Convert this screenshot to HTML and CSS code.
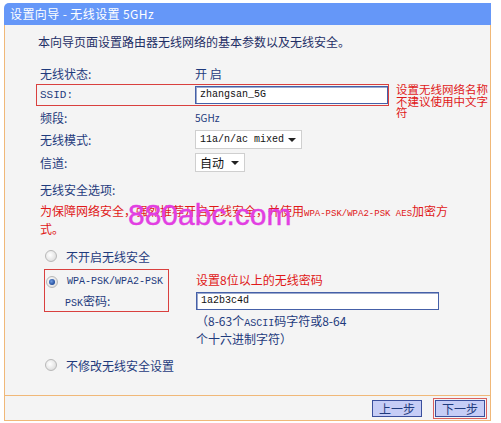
FILE: index.html
```html
<!DOCTYPE html>
<html>
<head>
<meta charset="utf-8">
<link rel="stylesheet" href="styles.css">
</head>
<body>
<div class="frame">
  <div class="title">设置向导 - 无线设置 5GHz</div>
  <div class="panel">
    <p class="intro">本向导页面设置路由器无线网络的基本参数以及无线安全。</p>
    <div class="row"><span class="label">无线状态:</span><span class="value">开 启</span></div>
    <div class="row ssid-row">
      <div class="ssid-box">
        <span class="label">SSID:</span>
        <span class="input ssid-input">zhangsan_5G</span>
      </div>
      <div class="note">设置无线网络名称<br>不建议使用中文字<br>符</div>
    </div>
    <div class="row"><span class="label">频段:</span><span class="value small">5GHz</span></div>
    <div class="row sel-row"><span class="label">无线模式:</span><span class="select mode">11a/n/ac mixed<i class="arrow"></i></span></div>
    <div class="row sel-row"><span class="label">信道:</span><span class="select chan">自动<i class="arrow"></i></span></div>
    <div class="row sec-title"><span class="label">无线安全选项:</span></div>
    <p class="warn">为保障网络安全，强烈推荐开启无线安全，并使用<span class="mono-s">WPA-PSK/WPA2-PSK AES</span>加密方<br>式。</p>
    <div class="row radio-row r1"><span class="radio"></span><span class="rlabel">不开启无线安全</span></div>
    <div class="wpa-area">
      <div class="wpa-box">
        <div class="wpa-line"><span class="radio checked"></span><span class="rlabel mono">WPA-PSK/WPA2-PSK</span></div>
        <div class="wpa-line psk"><span class="rlabel"><span class="mono">PSK</span>密码:</span></div>
      </div>
      <div class="wpa-right">
        <div class="pw-note">设置8位以上的无线密码</div>
        <span class="input pw-input">1a2b3c4d</span>
      </div>
    </div>
    <p class="hint">（8-63个<span class="mono">ASCII</span>码字符或8-64<br>个十六进制字符）</p>
    <div class="row radio-row r3"><span class="radio"></span><span class="rlabel">不修改无线安全设置</span></div>
    <div class="watermark">880abc.com</div>
  </div>
  <div class="footer">
    <span class="btn">上一步</span>
    <span class="btn-wrap"><span class="btn">下一步</span></span>
  </div>
</div>
</body>
</html>
```

FILE: styles.css
```css
html, body {
  margin: 0;
  padding: 0;
  background: #ffffff;
}
body {
  font-family: "Noto Sans CJK SC", "Liberation Sans", sans-serif;
  font-size: 12px;
  color: #1f3b7d;
}
.frame {
  margin: 3px 0 0 4px;
  width: 487px;
}
.title {
  height: 22px;
  line-height: 22px;
  background: #6597f8;
  color: #ffffff;
  padding-left: 6px;
  border-radius: 5px 0 0 0;
  font-size: 12px;
  letter-spacing: 0.4px;
}
.panel {
  position: relative;
  box-sizing: border-box;
  height: 371px;
  background: #f4f4f4;
  border-left: 1px solid #f0b878;
  border-right: 1px solid #f0b878;
  border-bottom: 1px solid #f0b878;
  padding: 8px 0 0 33px;
  overflow: hidden;
}
.intro {
  margin: 0;
  line-height: 18px;
  color: #1f2f66;
}
.row {
  display: flex;
  align-items: center;
  height: 22px;
}
.intro + .row {
  margin-top: 11px;
}
.label {
  width: 155px;
  flex: none;
  color: #1f3b7d;
}
.value {
  color: #1f3b7d;
}
.value.small {
  font-size: 10px;
}
.row:not(.ssid-row) {
  padding-left: 2px;
}
.ssid-row {
  height: 22px;
  align-items: flex-start;
  position: relative;
}
.ssid-box {
  box-sizing: border-box;
  display: flex;
  align-items: center;
  width: 354px;
  height: 22px;
  border: 1px solid #d9403e;
  margin-left: -2px;
  padding-left: 3px;
}
.ssid-box .label {
  font-family: "Liberation Mono", monospace;
  font-size: 11px;
}
.input {
  box-sizing: border-box;
  display: inline-block;
  background: #ffffff;
  border: 1px solid #4560a8;
  box-shadow: inset 1px 1px 0 #9aa8cc;
  height: 18px;
  line-height: 16px;
  padding-left: 4px;
  font-family: "Liberation Mono", monospace;
  font-size: 10px;
  color: #111111;
}
.ssid-input {
  width: 193px;
}
.note {
  margin-left: 7px;
  color: #e01818;
  font-size: 11.5px;
  line-height: 11.5px;
  width: 96px;
  white-space: nowrap;
}
.sel-row {
  height: 23px;
}
.select {
  box-sizing: border-box;
  display: inline-flex;
  align-items: center;
  background: #ffffff;
  border: 1px solid #cfcfcf;
  height: 19px;
  padding-left: 4px;
  color: #111111;
  position: relative;
}
.select.mode {
  width: 107px;
  font-family: "Liberation Mono", monospace;
  font-size: 10px;
}
.select.chan {
  width: 50px;
  font-size: 12px;
}
.arrow {
  position: absolute;
  right: 5px;
  top: 7px;
  width: 0;
  height: 0;
  border-left: 4px solid transparent;
  border-right: 4px solid transparent;
  border-top: 4px solid #222222;
}
.sec-title {
  margin-top: 4px;
}
.warn {
  margin: 2px 0 0 2px;
  line-height: 18px;
  color: #e01818;
}
.mono {
  font-family: "Liberation Mono", monospace;
  font-size: 10px;
  line-height: 10px;
}
.mono-s {
  font-family: "Liberation Mono", monospace;
  font-size: 9px;
  line-height: 10px;
}
.radio {
  box-sizing: border-box;
  display: inline-block;
  width: 12px;
  height: 12px;
  border-radius: 50%;
  border: 1px solid #b8b8b8;
  background: radial-gradient(circle at 40% 40%, #ffffff 0%, #e6e6e6 60%, #cfcfcf 100%);
  flex: none;
  position: relative;
}
.radio.checked::after {
  content: "";
  position: absolute;
  left: 2px;
  top: 2px;
  width: 6px;
  height: 6px;
  border-radius: 50%;
  background: radial-gradient(circle at 40% 40%, #6f9be0 0%, #1f4a9a 70%);
}
.rlabel {
  color: #1f3b7d;
  white-space: nowrap;
}
.radio-row .radio {
  margin-left: 5px;
  margin-right: 9px;
}
.r1 {
  margin-top: 7px;
}
.wpa-area {
  display: flex;
  margin-top: 2px;
}
.wpa-box {
  box-sizing: border-box;
  width: 125px;
  height: 43px;
  border: 1px solid #d9403e;
  margin-left: 6px;
  padding-top: 2px;
}
.wpa-line {
  display: flex;
  align-items: center;
  height: 19px;
}
.wpa-line .radio {
  margin-left: 1px;
  margin-right: 9px;
}
.wpa-line.psk {
  padding-left: 20px;
}
.wpa-right {
  margin-left: 27px;
  padding-top: 1px;
}
.pw-note {
  color: #e01818;
  height: 19px;
  line-height: 19px;
}
.pw-input {
  width: 243px;
  margin-top: 2px;
}
.hint {
  margin: 0 0 0 158px;
  line-height: 18px;
  color: #1f3b7d;
}
.r3 {
  margin-top: 6px;
}
.watermark {
  position: absolute;
  left: 123px;
  top: 172px;
  font-family: "Liberation Sans", sans-serif;
  font-size: 30px;
  line-height: 36px;
  color: #e23fe2;
  -webkit-text-stroke: 0.4px #e23fe2;
  pointer-events: none;
}
.footer {
  box-sizing: border-box;
  height: 25px;
  background: #f4f4f4;
  border-left: 1px solid #f0b878;
  border-right: 1px solid #f0b878;
  border-bottom: 1px solid #f0b878;
  display: flex;
  align-items: center;
  justify-content: flex-end;
  padding-right: 3px;
  gap: 11px;
}
.btn {
  box-sizing: border-box;
  display: inline-block;
  width: 50px;
  height: 17px;
  line-height: 15px;
  text-align: center;
  background: #c6cdf6;
  border: 1px solid #3a4f9c;
  color: #1f3b7d;
  font-size: 12px;
}
.btn-wrap {
  display: inline-flex;
  padding: 1px;
  border: 1px solid #d9605e;
}
```
